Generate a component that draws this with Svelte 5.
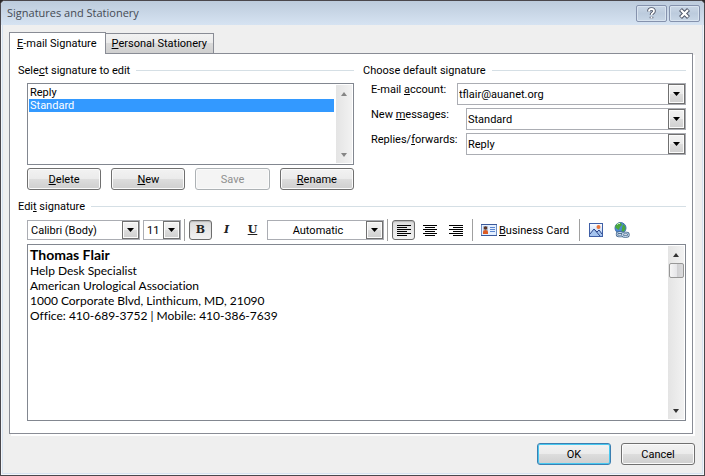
<script>
    let signatures = ['Reply', 'Standard'];
    let selected = 'Standard';
    let account = 'tflair@auanet.org';
    let newMessages = 'Standard';
    let replies = 'Reply';
    let fontName = 'Calibri (Body)';
    let fontSize = '11';
    let color = 'Automatic';
    let bold = true;
    let italic = false;
    let underline = false;
    let align = 'left';

    const details = [
        'Help Desk Specialist',
        'American Urological Association',
        '1000 Corporate Blvd, Linthicum, MD, 21090',
        'Office: 410-689-3752 | Mobile: 410-386-7639'
    ];

    const aligns = {
        left: 'M0 1.5h14M0 3.5h10M0 5.5h14M0 7.5h10M0 9.5h14M0 11.5h10',
        center: 'M0 1.5h14M2 3.5h10M0 5.5h14M2 7.5h10M0 9.5h14M2 11.5h10',
        right: 'M0 1.5h14M4 3.5h10M0 5.5h14M4 7.5h10M0 9.5h14M4 11.5h10'
    };
</script>

<style>
    :global(body) {
        margin: 0;
        background: #2b2729;
    }

    .dialog, button, select {
        font-family: Roboto, "DejaVu Sans Condensed", sans-serif;
        font-size: 11px;
        line-height: 13px;
        color: #000;
    }

    .dialog {
        box-sizing: border-box;
        min-height: 100vh;
        display: flex;
        flex-direction: column;
        background: #efefef;
        border: 1px solid #4a474c;
        border-radius: 5px 5px 0 0;
        box-shadow: inset 0 0 0 1px #f3f6fa, inset 0 0 0 2px #d6e2f0;
        overflow: hidden;
    }

    button {
        padding: 0;
        margin: 0;
        cursor: default;
    }

    header {
        display: flex;
        align-items: center;
        gap: 2px;
        height: 24px;
        padding: 0 4px 0 6px;
        background: linear-gradient(#bccbdc, #d6e3f2);
    }

    h1 {
        flex: 1;
        margin: 0;
        font: 11px/16px "Open Sans", "Noto Sans", sans-serif;
        color: #454b54;
    }

    .caption {
        width: 31px;
        height: 17px;
        display: grid;
        place-items: center;
        border: 1px solid #8592ad;
        border-radius: 2px;
        background: linear-gradient(#c9d6e5, #bccbdd 50%, #c8d6e6);
        box-shadow: inset 0 0 0 1px #d8e3ef;
    }

    .tabs {
        display: flex;
        align-items: flex-end;
        margin: 7px 0 0 8px;
        position: relative;
    }

    .tab {
        height: 20px;
        padding: 0 6px;
        border: 1px solid #898c95;
        border-left: 0;
        border-bottom: 0;
        background: linear-gradient(#f2f2f2, #ebebeb 50%, #dadada 50%, #cfcfcf);
    }

    .tab.active {
        height: 22px;
        padding: 0 8px 0 7px;
        margin-bottom: -1px;
        border-left: 1px solid #898c95;
        background: #fff;
    }

    .panel {
        flex: 1;
        display: flex;
        flex-direction: column;
        margin: 0 11px 0 8px;
        padding: 10px 6px 12px 8px;
        background: #fff;
        border: 1px solid #898c95;
        box-shadow: 2px 2px 0 #fff;
    }

    .columns {
        display: grid;
        grid-template-columns: 337fr 324fr;
        gap: 9px;
    }

    h2 {
        display: flex;
        align-items: center;
        gap: 6px;
        margin: 0;
        font-size: 11px;
        font-weight: normal;
        line-height: 13px;
    }

    h2::after {
        content: "";
        flex: 1;
        height: 1px;
        background: #d5dfe5;
    }

    .inset {
        margin-left: 9px;
    }

    .list {
        display: flex;
        height: 80px;
        margin-top: 6px;
        border: 1px solid #828790;
    }

    .list select {
        flex: 1;
        min-width: 0;
        margin: 2px 1px 1px;
        padding: 0;
        border: 0;
        border-radius: 0;
        outline: 0;
        background: #fff;
        overflow: hidden;
        scrollbar-width: none;
    }

    .list option {
        min-height: 13px;
        padding: 0 1px;
    }

    .list option:checked {
        color: #fff;
        background: #39f linear-gradient(#39f, #39f);
    }

    .scroll {
        width: 16px;
        margin: 1px;
        display: flex;
        flex-direction: column;
        align-items: center;
        background: linear-gradient(90deg, #e4e4e4, #f2f2f2);
    }

    .scroll svg {
        margin: 7px 0 6px;
    }

    .scroll .down {
        margin-top: auto;
    }

    .thumb {
        box-sizing: border-box;
        width: 15px;
        height: 15px;
        border: 1px solid #979797;
        border-radius: 2px;
        background: linear-gradient(90deg, #f5f5f5, #e6e6e9 50%, #cfcfd1 50%, #dcdcde);
    }

    .actions {
        display: grid;
        grid-template-columns: repeat(4, 1fr);
        gap: 10px;
        margin-top: 3px;
    }

    .push {
        height: 22px;
        border: 1px solid #707070;
        border-radius: 3px;
        background: linear-gradient(#f2f2f2, #ebebeb 50%, #dddddd 50%, #cfcfcf);
        box-shadow: inset 0 0 0 1px #fbfbfb;
    }

    .push:disabled {
        color: #8f8f8f;
        border-color: #adb2b5;
        background: #f4f4f4;
    }

    .push.default {
        border-color: #3c7fb1;
        box-shadow: inset 0 0 0 1px #48c8f0;
    }

    .field {
        display: flex;
        margin-left: 8px;
        margin-top: 3px;
    }

    .field label {
        width: 95px;
    }

    .field.first {
        margin-top: 6px;
    }

    .field.first label {
        width: 86px;
    }

    .combo {
        flex: 1;
        box-sizing: border-box;
        display: flex;
        height: 22px;
        border: 1px solid #abadb3;
        background: #fff;
        position: relative;
    }

    .combo select {
        flex: 1;
        min-width: 0;
        appearance: none;
        border: 0;
        border-radius: 0;
        outline: 0;
        margin: 0;
        padding: 0 18px 0 1px;
        background: transparent;
    }

    .combo .arrow {
        position: absolute;
        top: 0;
        right: 0;
        bottom: 0;
        width: 15px;
        display: grid;
        place-items: center;
        border: 1px solid #707070;
        background: linear-gradient(#f2f2f2, #ebebeb 50%, #dddddd 50%, #cfcfcf);
        box-shadow: inset 0 0 0 1px #fbfbfb;
        pointer-events: none;
    }

    .edit {
        margin-top: 10px;
    }

    .toolbar {
        display: flex;
        align-items: center;
        height: 22px;
        margin-top: 6px;
    }

    .toolbar .combo {
        flex: none;
        height: 20px;
    }

    .toolbar .combo select {
        padding-left: 3px;
    }

    .toolbar .font {
        width: 113px;
        margin-right: 3px;
    }

    .toolbar .size {
        width: 38px;
    }

    .toolbar .color {
        width: 117px;
    }

    .toolbar .color select {
        text-align: center;
        text-align-last: center;
    }

    .sep {
        width: 1px;
        height: 22px;
        margin: 0 4px 0 3px;
        background: #a0a0a0;
    }

    .tool {
        box-sizing: border-box;
        width: 23px;
        height: 20px;
        margin-right: 3px;
        display: grid;
        place-items: center;
        border: 1px solid transparent;
        border-radius: 3px;
        background: none;
        font: bold 12px/16px "DejaVu Serif", serif;
    }

    .tool + .sep {
        margin-left: 2px;
    }

    .letter {
        font-size: 11px;
        color: #222;
    }

    .tool.on {
        border-color: #6d6d6d;
        background: linear-gradient(#dcdcdc, #f2f2f2);
        box-shadow: inset 0 1px 1px #b5b5b5;
    }

    .tool.card {
        display: flex;
        align-items: center;
        width: auto;
        gap: 2px;
        padding: 0 4px 0 3px;
        font: inherit;
    }

    .editor {
        flex: 1;
        display: flex;
        min-height: 174px;
        margin-top: 3px;
        border: 1px solid #828790;
    }

    .text {
        flex: 1;
        padding: 2px;
        outline: 0;
        font: 12px/15px Lato, Carlito, sans-serif;
        font-variant-ligatures: none;
    }

    .text p {
        margin: 0;
    }

    .text .name {
        font-size: 14px;
        line-height: 16px;
        font-weight: bold;
    }

    footer {
        display: flex;
        justify-content: flex-end;
        gap: 10px;
        padding: 9px 9px 10px;
    }

    footer .push {
        width: 74px;
    }
</style>

{#snippet down()}
    <svg width="8" height="4" viewBox="0 0 8 4"><path d="M0 0h7L3.5 4z" fill="#000" /></svg>
{/snippet}

{#snippet scrollbar(thumb)}
    <div class="scroll" aria-hidden="true">
        <svg width="8" height="4" viewBox="0 0 8 4"><path d="M1 4h6L4 0z" fill={thumb ? '#333' : '#858585'} /></svg>
        {#if thumb}<div class="thumb"></div>{/if}
        <svg class="down" width="8" height="4" viewBox="0 0 8 4"><path d="M1 0h6L4 4z" fill={thumb ? '#333' : '#858585'} /></svg>
    </div>
{/snippet}

<main class="dialog">
    <header>
        <h1>Signatures and Stationery</h1>
        <button class="caption" aria-label="Help">
            <svg width="11" height="13" viewBox="0 0 11 13" fill="none">
                <path d="M3 4.500V4q0-2 2.500-2T8 4q0 1.300-1.300 2Q5.500 6.700 5.500 8M5.500 9.800v1.400" stroke="#4f5668" stroke-width="3.600" />
                <path d="M3 4.500V4q0-2 2.500-2T8 4q0 1.300-1.300 2Q5.500 6.700 5.500 8M5.500 9.800v1.400" stroke="#fff" stroke-width="1.800" />
            </svg>
        </button>
        <button class="caption" aria-label="Close">
            <svg width="13" height="11" viewBox="0 0 13 11" fill="none">
                <path d="M2.500 1.500l8 8M10.500 1.500l-8 8" stroke="#4f5668" stroke-width="4.200" />
                <path d="M3 2l7 7M10 2l-7 7" stroke="#fff" stroke-width="2.200" />
            </svg>
        </button>
    </header>

    <div class="tabs" role="tablist">
        <button class="tab active" role="tab" aria-selected="true"><u>E</u>-mail Signature</button>
        <button class="tab" role="tab" aria-selected="false"><u>P</u>ersonal Stationery</button>
    </div>

    <div class="panel" role="tabpanel">
        <div class="columns">
            <section>
                <h2><label for="signatures">Sele<u>c</u>t signature to edit</label></h2>
                <div class="list inset">
                    <select id="signatures" size="6" bind:value={selected}>
                        {#each signatures as name}
                            <option value={name}>{name}</option>
                        {/each}
                    </select>
                    {@render scrollbar(false)}
                </div>
                <div class="actions inset">
                    <button class="push"><u>D</u>elete</button>
                    <button class="push"><u>N</u>ew</button>
                    <button class="push" disabled>Save</button>
                    <button class="push"><u>R</u>ename</button>
                </div>
            </section>

            <section>
                <h2>Choose default signature</h2>
                <div class="field first">
                    <label for="account">E-mail <u>a</u>ccount:</label>
                    <div class="combo">
                        <select id="account" bind:value={account}>
                            <option>tflair@auanet.org</option>
                        </select>
                        <span class="arrow">{@render down()}</span>
                    </div>
                </div>
                <div class="field">
                    <label for="new-messages">New <u>m</u>essages:</label>
                    <div class="combo">
                        <select id="new-messages" bind:value={newMessages}>
                            {#each signatures as name}<option>{name}</option>{/each}
                        </select>
                        <span class="arrow">{@render down()}</span>
                    </div>
                </div>
                <div class="field">
                    <label for="replies">Replies/<u>f</u>orwards:</label>
                    <div class="combo">
                        <select id="replies" bind:value={replies}>
                            {#each signatures as name}<option>{name}</option>{/each}
                        </select>
                        <span class="arrow">{@render down()}</span>
                    </div>
                </div>
            </section>
        </div>

        <h2 class="edit" id="edit-label"><span>Edi<u>t</u> signature</span></h2>
        <div class="toolbar inset">
            <div class="combo font">
                <select aria-label="Font" bind:value={fontName}><option>Calibri (Body)</option></select>
                <span class="arrow">{@render down()}</span>
            </div>
            <div class="combo size">
                <select aria-label="Font size" bind:value={fontSize}><option>11</option></select>
                <span class="arrow">{@render down()}</span>
            </div>
            <span class="sep"></span>
            <button class="tool letter" class:on={bold} on:click={() => bold = !bold}>B</button>
            <button class="tool letter" class:on={italic} on:click={() => italic = !italic}><i>I</i></button>
            <button class="tool letter" class:on={underline} on:click={() => underline = !underline}><u>U</u></button>
            <div class="combo color">
                <select aria-label="Font color" bind:value={color}><option>Automatic</option></select>
                <span class="arrow">{@render down()}</span>
            </div>
            <span class="sep"></span>
            {#each Object.entries(aligns) as [key, path]}
                <button class="tool" class:on={align === key} aria-label="Align {key}" on:click={() => align = key}>
                    <svg width="14" height="13" viewBox="0 0 14 13"><path d={path} stroke="#000" /></svg>
                </button>
            {/each}
            <span class="sep"></span>
            <button class="tool card">
                <svg width="16" height="12" viewBox="0 0 16 12">
                    <rect x=".5" y=".5" width="15" height="11" fill="#e4efff" stroke="#6f8fc4" />
                    <path d="M0 .5h16M0 11.500h16" stroke="#39589a" />
                    <rect x="2" y="2" width="5" height="8" fill="#b9c4d4" />
                    <circle cx="4.500" cy="4" r="1.800" fill="#5b3324" />
                    <path d="M2 10V8q0-2 2.500-2T7 8v2z" fill="#dc5a22" />
                    <path d="M9 3.500h5M9 5.500h5M9 7.500h5" stroke="#5b86d0" />
                </svg>
                <span><u>B</u>usiness Card</span>
            </button>
            <span class="sep"></span>
            <button class="tool" aria-label="Picture">
                <svg width="14" height="14" viewBox="0 0 14 14">
                    <defs>
                        <linearGradient id="sky" x2="0" y2="1"><stop stop-color="#fff" /><stop offset="1" stop-color="#a9c8f5" /></linearGradient>
                    </defs>
                    <rect x=".5" y=".5" width="13" height="13" fill="url(#sky)" stroke="#3f5fa6" />
                    <path d="M1 11l4-5 3 3 2-2 3 4v2H1z" fill="#a5c4ee" />
                    <path d="M1 11l4-5 3 3 2-2 3 4M5 6l6 7" fill="none" stroke="#2a4488" />
                    <circle cx="9.500" cy="4" r="2" fill="#e8743a" />
                </svg>
            </button>
            <button class="tool" aria-label="Hyperlink">
                <svg width="16" height="16" viewBox="0 0 16 16">
                    <circle cx="6.500" cy="6" r="5.500" fill="#4b86d8" stroke="#4470a8" />
                    <path d="M2 3Q4 0 7 .8L8 3 6 5 5 8 3 7 1 5zM9 2l2 2 .5 3-2 3-2-1L8 6z" fill="#48a83c" />
                    <path d="M3 2.500q1.500-1.500 3-1" stroke="#d8f2d0" fill="none" />
                    <g fill="none" stroke="#4a6a8e" stroke-width="2.400">
                        <rect x="3" y="10.500" width="6" height="3.500" rx="1.700" />
                        <rect x="8.500" y="11" width="6" height="3.500" rx="1.700" />
                    </g>
                    <g fill="none" stroke="#c5d9ed">
                        <rect x="3" y="10.500" width="6" height="3.500" rx="1.700" />
                        <rect x="8.500" y="11" width="6" height="3.500" rx="1.700" />
                    </g>
                </svg>
            </button>
        </div>

        <div class="editor inset">
            <div class="text" contenteditable="true" role="textbox" aria-multiline="true" aria-labelledby="edit-label" tabindex="0" spellcheck="false">
                <p class="name">Thomas Flair</p>
                {#each details as line}
                    <p>{line}</p>
                {/each}
            </div>
            {@render scrollbar(true)}
        </div>
    </div>

    <footer>
        <button class="push default">OK</button>
        <button class="push">Cancel</button>
    </footer>
</main>
